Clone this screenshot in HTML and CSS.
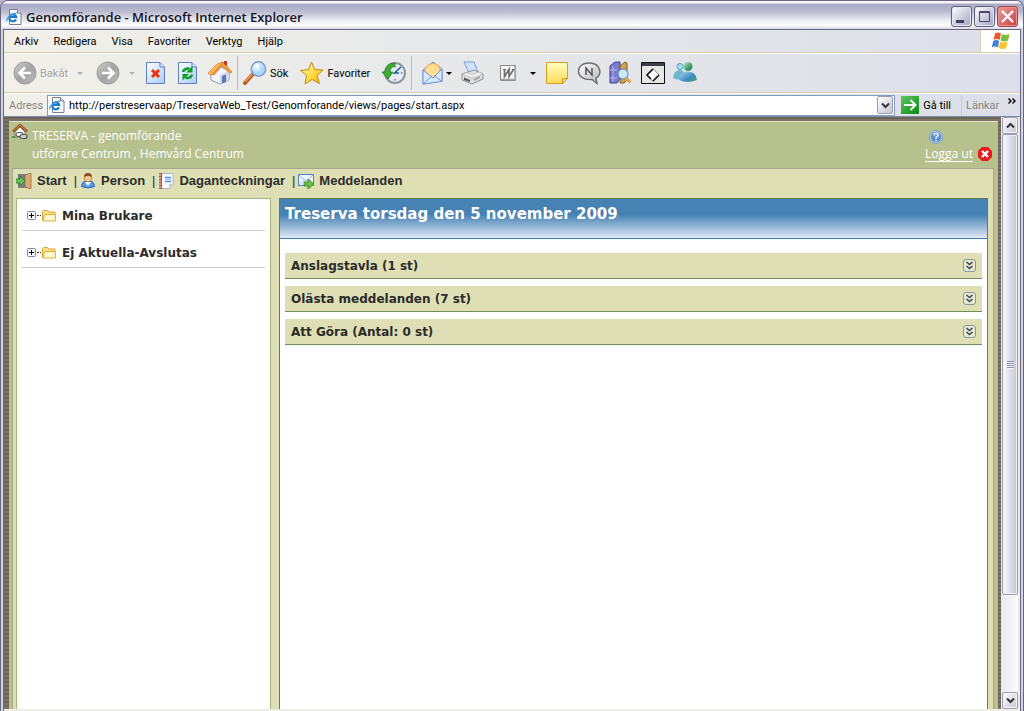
FILE: index.html
```html
<!DOCTYPE html>
<html lang="sv">
<head>
<meta charset="utf-8">
<title>Genomförande - Microsoft Internet Explorer</title>
<link rel="stylesheet" href="styles.css">
</head>
<body>
<svg class="defs" aria-hidden="true">
  <defs>
    <linearGradient id="grey" x2="1" y2="1"><stop stop-color="#d0d0d0"/><stop offset=".5" stop-color="#a4a4a4"/><stop offset="1" stop-color="#bcbcbc"/></linearGradient>
    <linearGradient id="page" x2="1" y2="1"><stop stop-color="#fff"/><stop offset="1" stop-color="#a9cdf8"/></linearGradient>
    <linearGradient id="gold" x2="1" y2="1"><stop stop-color="#fffbb0"/><stop offset=".6" stop-color="#ffd83a"/><stop offset="1" stop-color="#e8a010"/></linearGradient>
    <linearGradient id="note" x2="0" y2="1"><stop stop-color="#ffffc0"/><stop offset="1" stop-color="#ffd95a"/></linearGradient>
    <linearGradient id="silver" x2="1" y2="1"><stop stop-color="#fff"/><stop offset="1" stop-color="#b4b4ba"/></linearGradient>
    <linearGradient id="leaf" x2="1" y2="1"><stop stop-color="#5cc860"/><stop offset="1" stop-color="#0b8a12"/></linearGradient>
    <radialGradient id="lens" cx=".35" cy=".3"><stop stop-color="#fff"/><stop offset="1" stop-color="#a9d5f7"/></radialGradient>
    <linearGradient id="ball" x2="1" y2="1"><stop stop-color="#b5dcf0"/><stop offset=".6" stop-color="#3c88c4"/><stop offset="1" stop-color="#57a84d"/></linearGradient>
    <linearGradient id="ballgreen" x2="1" y2="1"><stop stop-color="#c5e8c0"/><stop offset=".6" stop-color="#3f9d62"/><stop offset="1" stop-color="#2e7f90"/></linearGradient>
    <symbol id="ie" viewBox="0 0 16 16">
      <path d="M3.500.5h8l3.500 3.500v11.500h-11.500z" fill="#fdfdfd" stroke="#777d90"/><path d="M11.500.5V4H15" fill="#dfe4ee" stroke="#777d90"/>
      <path d="M10 10.300A3.500 3.500 0 1 1 10.200 8H4" fill="none" stroke="#1d78c8" stroke-width="2.200"/><path d="M1 12.500C-1 9 8 3 11.500 4" fill="none" stroke="#46a5e8" stroke-width="1.200"/>
    </symbol>
    <symbol id="folder" viewBox="0 0 14 12">
      <path d="M.5 10.500v-9l1-1h4l1.500 1.500h6v8.500z" fill="#fbe08a" stroke="#d8a838"/><path d="M2.500 4.500h11v6.500H1z" fill="#fff3b8" stroke="#e0b548"/><path d="M4 7h7M4 9h6" stroke="#fff"/>
    </symbol>
    <symbol id="expand" viewBox="0 0 13 13">
      <rect x=".5" y=".5" width="12" height="12" rx="2.500" fill="#e6e8cf" stroke="#8a95a6"/><path d="M3.500 3l3 2.500 3-2.500M3.500 7l3 2.500 3-2.500" fill="none" stroke="#3d4560" stroke-width="1.600"/>
    </symbol>
    <symbol id="plus" viewBox="0 0 9 9">
      <rect x=".5" y=".5" width="8" height="8" rx="1" fill="#f4f5f8" stroke="#7189aa"/><path d="M2 4.500h5M4.500 2v5" stroke="#000"/>
    </symbol>
    <symbol id="down" viewBox="0 0 8 8"><path d="M1 3h6L4 6z" fill="currentColor"/></symbol>
  </defs>
</svg>

<div class="window">
  <header class="titlebar">
    <svg class="i16"><use href="#ie"/></svg>
    <h1 class="title">Genomförande - Microsoft Internet Explorer</h1>
    <div class="winbuttons">
      <button class="winbtn" aria-label="Minimera"><svg viewBox="0 0 19 19"><path d="M4 13h8v3H4z" fill="#3f3f62"/></svg></button>
      <button class="winbtn" aria-label="Maximera"><svg viewBox="0 0 19 19"><path d="M4.500 4.500h10v10h-10zM4.500 5.500h10" fill="none" stroke="#47476b"/></svg></button>
      <button class="winbtn winbtn-close" aria-label="Stäng"><svg viewBox="0 0 19 19"><path d="M4 4l11 11M15 4L4 15" stroke="#fff" stroke-width="2.400"/></svg></button>
    </div>
  </header>

  <div class="frame">
    <div class="menurow">
      <nav class="menu">
        <button>Arkiv</button><button>Redigera</button><button>Visa</button><button>Favoriter</button><button>Verktyg</button><button>Hjälp</button>
      </nav>
      <div class="flag">
        <svg viewBox="0 0 20 20">
          <path d="M4 2.500q3-2 6 0L8.500 9q-3-2-6 0z" fill="#e85a2c"/><path d="M11 3q3 2 7.500 0L17 9.500q-4 2-7.500 0z" fill="#7bbd3a"/>
          <path d="M2.200 10q3-2 6 0L6.800 16.500q-3-2-6 0z" fill="#3e83d6"/><path d="M9.200 10.500q3 2 7.500 0L15.200 17q-4 2-7.500 0z" fill="#f9c22c"/>
        </svg>
      </div>
    </div>

    <div class="toolbar" role="toolbar" aria-label="Verktyg">
      <button class="tool tool-off"><svg viewBox="0 0 24 24"><circle cx="12" cy="12" r="11" fill="url(#grey)" stroke="#999"/><path d="M18 12H7M12 6.500L6.500 12l5.500 5.500" fill="none" stroke="#fff" stroke-width="2.600"/></svg>Bakåt</button>
      <button class="drop drop-off" aria-label="Bakåtlista"><svg><use href="#down"/></svg></button>
      <button class="tool gap-xs" aria-label="Framåt"><svg viewBox="0 0 24 24"><circle cx="12" cy="12" r="11" fill="url(#grey)" stroke="#999"/><path d="M6 12h11M12 6.500l5.500 5.500-5.500 5.500" fill="none" stroke="#fff" stroke-width="2.600"/></svg></button>
      <button class="drop drop-off" aria-label="Framåtlista"><svg><use href="#down"/></svg></button>
      <button class="tool" aria-label="Stopp"><svg viewBox="0 0 24 24"><path d="M2.500 1.500h13.500l4.500 4.500v16.500h-18z" fill="url(#page)" stroke="#5f7fc4"/><path d="M16 1.500V6h4.500" fill="#dbe6fb" stroke="#5f7fc4"/><path d="M8 9l7 7M15 9l-7 7" stroke="#f03208" stroke-width="3"/></svg></button>
      <button class="tool" aria-label="Uppdatera"><svg viewBox="0 0 24 24"><path d="M2.500 1.500h13.500l4.500 4.500v16.500h-18z" fill="url(#page)" stroke="#5f7fc4"/><path d="M16 1.500V6h4.500" fill="#dbe6fb" stroke="#5f7fc4"/><path d="M7 11q1-4 6.500-3.500" fill="none" stroke="#0f9d28" stroke-width="2.600"/><path d="M16.500 5v6.500H10z" fill="#0f9d28"/><path d="M16 13.500q-1 4-6.500 3.500" fill="none" stroke="#0f9d28" stroke-width="2.600"/><path d="M6.500 19.500V13H13z" fill="#0f9d28"/></svg></button>
      <button class="tool" aria-label="Startsida"><svg viewBox="0 0 24 24"><path d="M3 13l8-8 10 5v9l-9 4-9-4z" fill="#f5f6fd" stroke="#8c96be"/><path d="M12 14l9-4v9l-9 4z" fill="#cdd9f4"/><path d="M0 12L9 3l6-2-9 12-4 1z" fill="#ffb65a" stroke="#d9852e" stroke-width=".7"/><path d="M15 1l9 10-2 1.500L14 5 6 14l-2-.5z" fill="#f39a3c" stroke="#cf7b29" stroke-width=".7"/><path d="M16 0h3v5l-3-2z" fill="#b63a2a"/><path d="M14 15l4-1.500V21l-4 1.500z" fill="#6177a6"/></svg></button>
      <span class="sep"></span>
      <button class="tool"><svg viewBox="0 0 24 24"><path d="M2 22l8-9" stroke="#b95b1f" stroke-width="4" stroke-linecap="round"/><path d="M2.500 20.500l6.500-7" stroke="#f19a50" stroke-width="1.500"/><circle cx="15.500" cy="8" r="7.200" fill="url(#lens)" stroke="#7f9fd2" stroke-width="1.500"/></svg>Sök</button>
      <button class="tool gap-xs"><svg viewBox="0 0 24 24"><path d="M11.500 1l3.200 7.500 8.300.5-6 5.500 2.500 8-7.500-4-7 4.500 1.500-8.500L.5 9.500l8-1z" fill="url(#gold)" stroke="#c58a12" stroke-linejoin="round"/></svg>Favoriter</button>
      <button class="tool gap-xs" aria-label="Tidigare"><svg viewBox="0 0 24 24"><circle cx="13" cy="12" r="10" fill="#e2effa" stroke="#8d959c" stroke-width="2"/><path d="M13 5v1.500M13 18v1.500M19 12h1.500" stroke="#e05030" stroke-width="1.500"/><path d="M19 6l-6.500 6H17" fill="none" stroke="#27618c" stroke-width="1.600"/><path d="M13 2Q4 2 3 11H0l6 7 5-7H8q0-5 5-6z" fill="#3eae32" stroke="#237a22" stroke-width=".8"/></svg></button>
      <span class="sep"></span>
      <button class="tool gap-xs" aria-label="E-post"><svg viewBox="0 0 24 24"><path d="M2 9L12 1l9 7v12L2 23z" fill="#b8d4fa" stroke="#7592d8"/><path d="M4 8q2-5 8-5.500 6 .5 7 5.500v5l-8 5-7-5z" fill="#ffdc90" stroke="#e5a544"/><path d="M2 9l10 8 9-9v12.500L2 23z" fill="#d5eafe" stroke="#7592d8"/><path d="M2 23l9-8M21 20.500l-8-6" fill="none" stroke="#7592d8"/></svg></button>
      <button class="drop pull" aria-label="E-postlista"><svg><use href="#down"/></svg></button>
      <button class="tool" aria-label="Skriv ut"><svg viewBox="0 0 24 24"><path d="M3 1h10l4 10-9 1z" fill="#cfe3ff" stroke="#7b9ade"/><path d="M1 13l12-4 9 4v5l-11 5-10-4z" fill="#dededf" stroke="#929292"/><path d="M1 13l10 4 11-4-4-2-7 3-5-2.500z" fill="#f6f6f6" stroke="#a2a2a2" stroke-width=".6"/><path d="M3 16.500l6 2.500v2l-6-2z" fill="#555"/><path d="M13 19l6-3" stroke="#999" stroke-width="1.500"/></svg></button>
      <button class="tool gap-xs" aria-label="Redigera i Word"><svg viewBox="0 0 24 24"><path d="M3.500 4.500h15v15h-15z" fill="#f3f3f3" stroke="#8a8a8a"/><path d="M4 18.500h14V5" fill="none" stroke="#a5a5a5" stroke-width="1.500"/><path d="M6 8.500h3M11 8.500h2M15 8.500h2.500" stroke="#6b6b6b"/><path d="M7.500 8.500v7l4.500-7v7l4.500-7" fill="none" stroke="#6b6b6b" stroke-width="1.600"/></svg></button>
      <button class="drop" aria-label="Redigeringslista"><svg><use href="#down"/></svg></button>
      <button class="tool" aria-label="Anteckning"><svg viewBox="0 0 24 24"><path d="M1.500 1.500h21v16l-5 5h-16z" fill="url(#note)" stroke="#d6a022"/><path d="M17.500 22.500v-4.500l5-.5z" fill="#ffe896" stroke="#c98c12"/></svg></button>
      <button class="tool" aria-label="Diskutera"><svg viewBox="0 0 24 24"><path d="M12 2c13 0 13 13 7 15l1 5.500-5-4C-2 20-3 2 12 2z" fill="url(#silver)" stroke="#6c6c6c" stroke-width="1.400"/><path d="M9 14V7l6 7V7" fill="none" stroke="#555" stroke-width="1.500"/></svg></button>
      <button class="tool" aria-label="Referens"><svg viewBox="0 0 24 24"><path d="M1 5l5-4h5v17l-3 4H1z" fill="#7a7ad0" stroke="#40408f"/><path d="M4 5v16M1 9h7M1 17h7" stroke="#b8b8f0"/><path d="M11 5l5-4 2 1v17l-3 3h-4z" fill="#caa256" stroke="#806025"/><path d="M17 17l4.500 4.500" stroke="#e4a63a" stroke-width="3"/><circle cx="14" cy="13" r="5" fill="#cceafd" stroke="#5887b5"/></svg></button>
      <button class="tool" aria-label="Utvecklarfönster"><svg viewBox="0 0 24 24"><path d="M.5 1.500h23v21H.5z" fill="#e6e6e6" stroke="#111"/><path d="M1 2h22v3H1z" fill="#3d3d46"/><path d="M12 7.500l6 6.500-6 6.500L6 14z" fill="#fff" stroke="#888"/><path d="M12 8l-6 6 4 4M18 14l-6 6" fill="none" stroke="#111" stroke-width="1.600"/></svg></button>
      <button class="tool" aria-label="Messenger"><svg viewBox="0 0 24 24"><circle cx="7" cy="5.500" r="3" fill="#a9dcf2" stroke="#4aa3cf"/><path d="M0 17q1-8 7-8 5 0 5 8-6 3-12 0z" fill="#6ab8c8"/><circle cx="15" cy="5.500" r="4.500" fill="url(#ballgreen)"/><path d="M6 19q1-8.500 9-8.500 8 0 9 8.500-9 4-18 0z" fill="url(#ball)"/></svg></button>
    </div>

    <form class="addressbar">
      <label class="addresslabel" for="address">Adress</label>
      <div class="addressbox">
        <svg class="i16"><use href="#ie"/></svg>
        <input id="address" class="address" type="text" value="http://perstreservaap/TreservaWeb_Test/Genomforande/views/pages/start.aspx">
        <button class="chev" type="button" aria-label="Visa adresser"><svg viewBox="0 0 9 7"><path d="M1 1.500L4.500 5 8 1.500" fill="none" stroke="#333" stroke-width="2"/></svg></button>
      </div>
      <button class="go" type="button"><svg viewBox="0 0 18 18"><path d="M0 0h18v18H0z" fill="url(#leaf)"/><path d="M3 9h11M9.500 4L14.500 9l-5 5" fill="none" stroke="#fff" stroke-width="2"/></svg>Gå till</button>
      <div class="links"><span>Länkar</span><button class="more" type="button" aria-label="Fler länkar"><svg viewBox="0 0 8 6"><path d="M.5.500L3 3 .5 5.500M4.500.5L7 3 4.500 5.500" fill="none" stroke="#000" stroke-width="1.400"/></svg></button></div>
    </form>

    <div class="viewport">
      <div class="desk">
        <div class="app">
          <div class="apphead">
            <svg class="i16 homeicon" viewBox="0 0 16 16"><path d="M3 8l5-5 5 5v5H3z" fill="#fff" stroke="#8d7a60"/><path d="M1 7.500l7-6.500 7 6.500" fill="none" stroke="#8a4a1c" stroke-width="2.400"/><path d="M1.500 7l6.500-6 6.500 6" fill="none" stroke="#e59a55"/><path d="M0 13h3" stroke="#4d9a3a" stroke-width="2"/><rect x="4" y="8.500" width="7" height="4" rx="2" fill="none" stroke="#555" stroke-width="1.200"/><rect x="8" y="10.500" width="7" height="4" rx="2" fill="#ccc" stroke="#555" stroke-width="1.200"/></svg>
            <div class="brand"><div>TRESERVA - genomförande</div><div>utförare Centrum , Hemvård Centrum</div></div>
            <div class="session">
              <button class="help" aria-label="Hjälp"><svg viewBox="0 0 14 14"><circle cx="7" cy="7" r="6.500" fill="#cfe0f6" stroke="#5b86c2" stroke-width=".8"/><circle cx="7" cy="7" r="5.300" fill="#5a8fd0"/><path d="M5 5.500Q5 3.500 7 3.500t2 1.800Q9 6.500 7 7.500V8.500M7 9.700v1.500" fill="none" stroke="#fff" stroke-width="1.500"/></svg></button>
              <div class="logout"><a href="#logout">Logga ut</a><svg viewBox="0 0 14 14"><path d="M4 0h6l4 4v6l-4 4H4l-4-4V4z" fill="#e81c1c"/><path d="M4 4l6 6M10 4l-6 6" stroke="#fff" stroke-width="2.400"/></svg></div>
            </div>
          </div>

          <div class="appbody">
            <nav class="appnav">
              <a href="#start"><svg viewBox="0 0 16 16"><path d="M2 1h10v14H2z" fill="#777e80"/><path d="M9 2l6-2v16l-6-2z" fill="#d9ab72" stroke="#8d6130" stroke-width=".7"/><path d="M0 6h4V3l5 5-5 5v-3H0z" fill="#6dbd59" stroke="#2e7c2c" stroke-width=".8"/></svg>Start</a><span class="bar">|</span>
              <a href="#person"><svg viewBox="0 0 16 16"><path d="M1.500 13.500Q2 8.500 5 8.500h6q3 0 3.500 5-6.500 3-13 0z" fill="#5b9be6" stroke="#2a63b4"/><path d="M5 9l3 4 3-4z" fill="#fff"/><circle cx="8" cy="5" r="3.800" fill="#f4c795" stroke="#a96a31" stroke-width=".7"/><path d="M4 4q0-4 4-4t4 4Q8 2 4 4z" fill="#8d4a1c"/></svg>Person</a><span class="bar">|</span>
              <a href="#daganteckningar"><svg viewBox="0 0 16 16"><path d="M3 .5h12v11l-4 4H3z" fill="#f8faff" stroke="#b1b5c0"/><path d="M1 0h3v16H1z" fill="#b6543c"/><path d="M0 2h3M0 5h3M0 8h3M0 11h3M0 14h3" stroke="#f4e9e4"/><path d="M7 4.500h6M7 8.500h6" stroke="#5b8bd5" stroke-width="1.600"/><path d="M7 6.500h6" stroke="#a5c2ed" stroke-width="1.600"/><path d="M11 15v-4h4z" fill="#c9cdd6"/></svg>Daganteckningar</a><span class="bar">|</span>
              <a href="#meddelanden"><svg viewBox="0 0 16 16"><path d="M.5 1.500h15v11H.5z" fill="#eef4fd" stroke="#4f82c8"/><path d="M1 2l7 6 7-6M1 12l5-5M15 12l-5-5" fill="none" stroke="#9dbbe4"/><path d="M6 9h4V6l6 5-6 5v-3H6z" fill="#6dbd45" stroke="#357f22" stroke-width=".8"/></svg>Meddelanden</a>
            </nav>

            <div class="columns">
              <aside class="tree">
                <div class="node"><button class="plus" aria-label="Expandera Mina Brukare"><svg><use href="#plus"/></svg></button><span class="dots"></span><svg class="folder"><use href="#folder"/></svg>Mina Brukare</div>
                <div class="node"><button class="plus" aria-label="Expandera Ej Aktuella-Avslutas"><svg><use href="#plus"/></svg></button><span class="dots"></span><svg class="folder"><use href="#folder"/></svg>Ej Aktuella-Avslutas</div>
              </aside>
              <main class="main">
                <h2 class="mainhead">Treserva torsdag den 5 november 2009</h2>
                <div class="panels">
                  <section class="panel"><h3>Anslagstavla (1 st)</h3><button aria-label="Visa Anslagstavla"><svg><use href="#expand"/></svg></button></section>
                  <section class="panel"><h3>Olästa meddelanden (7 st)</h3><button aria-label="Visa Olästa meddelanden"><svg><use href="#expand"/></svg></button></section>
                  <section class="panel"><h3>Att Göra (Antal: 0 st)</h3><button aria-label="Visa Att Göra"><svg><use href="#expand"/></svg></button></section>
                </div>
              </main>
            </div>
          </div>
        </div>
      </div>
      <div class="scroll">
        <button class="scrollbtn" aria-label="Rulla upp"><svg viewBox="0 0 9 7"><path d="M1 5.500L4.500 2 8 5.500" fill="none" stroke="#333" stroke-width="2"/></svg></button>
        <div class="track"><div class="thumb"><span class="grip"></span></div><div class="rest"></div></div>
        <button class="scrollbtn" aria-label="Rulla ned"><svg viewBox="0 0 9 7"><path d="M1 1.500L4.500 5 8 1.500" fill="none" stroke="#333" stroke-width="2"/></svg></button>
      </div>
    </div>
  </div>
</div>
</body>
</html>
```
FILE: styles.css
```css
* { box-sizing: border-box; }
html, body { height: 100%; }
body { margin: 0; overflow: hidden; background: #b9b8cf; font: 11px/15px Roboto, sans-serif; color: #000; }
svg { display: block; flex: none; }
button { display: flex; align-items: center; padding: 0; border: 0; background: none; font: inherit; color: inherit; white-space: nowrap; }
h1, h2, h3 { margin: 0; }
.defs { position: absolute; width: 0; height: 0; }
.i16 { width: 16px; height: 16px; }

.window { display: flex; flex-direction: column; height: 100vh; border: solid #69667f; border-width: 1px 1px 0; border-radius: 8px 8px 0 0; background: #d4d3e0; overflow: hidden; }
.titlebar { display: flex; align-items: center; height: 28px; padding: 3px 5px 0; background: linear-gradient(#f4f4fa 0, #f4f4fa 2px, #aaa9c6 3px, #b9b9cf 10px, #e4e4ed 18px, #fff 24px, #d8d8e4); }
.title { flex: 1; margin-left: 4px; font: 600 13px/18px "Open Sans", sans-serif; color: #15151f; white-space: nowrap; }
.winbuttons { display: flex; gap: 2px; }
.winbtn { width: 21px; height: 21px; border: 1px solid #61617e; border-radius: 3px; background: linear-gradient(135deg, #fff, #b3b3ce 80%); box-shadow: inset 0 0 0 1px #e6e6f2; }
.winbtn svg { width: 19px; height: 19px; }
.winbtn-close { border-color: #a5434d; background: linear-gradient(135deg, #ee9c96, #cc3f45); box-shadow: inset 0 0 0 1px #e8908e; }

.frame { display: flex; flex: 1; flex-direction: column; min-height: 0; margin: 0 2px; border: solid #69667f; border-width: 1px 1px 0; background: linear-gradient(90deg, #f1f0e9, #e8e9ea 40%, #dcdfe9); }
.menurow { display: flex; height: 23px; border-bottom: 1px solid #d8ccae; }
.menu { display: flex; flex: 1; align-items: center; gap: 15px; padding-left: 10px; }
.flag { display: flex; align-items: center; justify-content: center; width: 40px; border-left: 1px solid #d8ccae; background: #fff; }
.flag svg { width: 20px; height: 20px; }

.toolbar { display: flex; align-items: center; gap: 8px; height: 40px; padding-left: 9px; border-top: 1px solid #fff; border-bottom: 1px solid #d8ccae; }
.tool { gap: 3px; height: 24px; }
.tool svg { width: 24px; height: 24px; }
.tool-off { color: #a2a09a; text-shadow: 1px 1px #fff; }
.drop { width: 8px; height: 24px; }
.drop svg { width: 8px; height: 8px; }
.drop-off { color: #b0b0ac; }
.pull { margin-left: -8px; }
.gap-xs { margin-left: 4px; }
.sep { width: 1px; height: 34px; margin: 0 -3px; background: #b9bac3; }

.addressbar { display: flex; align-items: center; height: 23px; margin: 0; padding-left: 5px; border-top: 1px solid #fff; }
.addresslabel { width: 38px; color: #85857f; }
.addressbox { display: flex; flex: 1; align-items: center; height: 21px; padding: 1px; border: 1px solid #7f9db9; background: #fff; }
.address { flex: 1; min-width: 0; padding: 0 4px; border: 0; outline: 0; background: none; font: inherit; color: #000; }
.chev { justify-content: center; width: 16px; height: 18px; border: 1px solid #9c9cb4; border-radius: 2px; background: linear-gradient(135deg, #fff, #c4c4d6); }
.chev svg, .scrollbtn svg { width: 9px; height: 7px; }
.go { gap: 4px; margin-left: 6px; }
.go svg { width: 18px; height: 18px; }
.links { display: flex; align-self: stretch; align-items: center; justify-content: space-between; width: 59px; margin-left: 10px; padding: 0 4px; border-left: 1px solid #d8ccae; color: #85857f; }
.more { align-self: flex-start; margin-top: 4px; }
.more svg { width: 8px; height: 6px; }

.viewport { display: flex; flex: 1; min-height: 0; border-top: 1px solid #7f8ea6; border-bottom: 2px solid #eeede5; }
.desk { display: flex; flex: 1; min-width: 0; padding: 4px 3px 0 5px; background: repeating-linear-gradient(#6a6557 0, #6a6557 2px, #7b7565 2px, #7b7565 4px); }
.app { display: flex; flex: 1; flex-direction: column; min-width: 0; padding: 0 4px 0 3px; border: solid #e4e2c8; border-width: 1px 0 0; background: #b7c18d; }
.apphead { display: flex; height: 46px; color: #fff; font: 12px/18px "Open Sans", sans-serif; }
.homeicon { margin-top: 2px; }
.brand { flex: 1; padding: 5px 0 0 4px; }
.session { display: flex; flex-direction: column; gap: 2px; padding-top: 8px; }
.help svg, .logout svg { width: 14px; height: 14px; }
.help { padding-left: 4px; }
.logout { display: flex; align-items: center; gap: 5px; padding-right: 2px; }
.logout a { border-bottom: 1px solid #fff; color: #fff; line-height: 15px; text-decoration: none; }

.appbody { display: flex; flex: 1; flex-direction: column; min-height: 0; padding: 0 5px 0 3px; border: solid #a6a791; border-width: 1px 1px 0; background: #dedfb5; }
.appnav { display: flex; align-items: center; height: 29px; padding-bottom: 6px; font: bold 13px/18px "Liberation Sans", Arial, sans-serif; color: #2c2c2c; }
.appnav a { display: flex; align-items: center; gap: 5px; color: inherit; text-decoration: none; }
.appnav a svg { width: 16px; height: 16px; }
.bar { margin: 0 3px 0 7px; font-weight: normal; }
.columns { display: flex; flex: 1; gap: 8px; min-height: 0; }
.tree { width: 255px; padding: 0 5px; border: 1px solid #a0b87b; border-bottom: 0; background: #fff; }
.node { display: flex; align-items: center; height: 32px; margin-bottom: 5px; padding: 2px 0 0 5px; border-bottom: 1px solid #ccc; font: bold 12px/14px "DejaVu Sans", Verdana, sans-serif; color: #2c2c2c; }
.plus svg { width: 9px; height: 9px; }
.dots { width: 4px; margin: 0 1px; border-top: 1px dotted #333; }
.folder { width: 14px; height: 12px; margin-right: 6px; }
.main { flex: 1; min-width: 0; border: 1px solid #5d8052; border-bottom: 0; background: #fff; }
.mainhead { height: 40px; padding: 5px; border-bottom: 1px solid #4682b4; background: linear-gradient(#4682b4 40%, #e0e8f4); color: #fff; font: bold 15px/20px "DejaVu Sans", Verdana, sans-serif; }
.panels { display: flex; flex-direction: column; gap: 7px; padding: 14px 5px; }
.panel { display: flex; align-items: center; justify-content: space-between; height: 26px; padding: 0 6px; border-bottom: 1px solid #6f8e57; background: #dedfb5; }
.panel h3 { font: bold 12px/14px "DejaVu Sans", Verdana, sans-serif; color: #2c2c2c; }
.panel svg { width: 13px; height: 13px; }

.scroll { display: flex; flex-direction: column; width: 19px; padding: 0 2px 0 1px; background: #eeede5; }
.scrollbtn { flex: none; justify-content: center; width: 16px; height: 17px; border: 1px solid #9c9cb4; border-radius: 2px; background: linear-gradient(135deg, #fff, #c4c4d6); box-shadow: inset 0 0 0 1px #f4f4f8; }
.track { display: flex; flex: 1; flex-direction: column; background: linear-gradient(90deg, #e9eaf1, #fcfcfe); }
.thumb { display: flex; flex: 459; align-items: center; justify-content: center; border: 1px solid #9c9cb4; border-radius: 2px; background: linear-gradient(90deg, #fff, #e8e8f0 30%, #c4c5d8); box-shadow: inset 0 0 0 1px #f0eff6; }
.rest { flex: 97; }
.grip { width: 7px; height: 8px; background: repeating-linear-gradient(#8b91ae 0, #8b91ae 1px, #f4f4fa 1px, #f4f4fa 2px); }
```
